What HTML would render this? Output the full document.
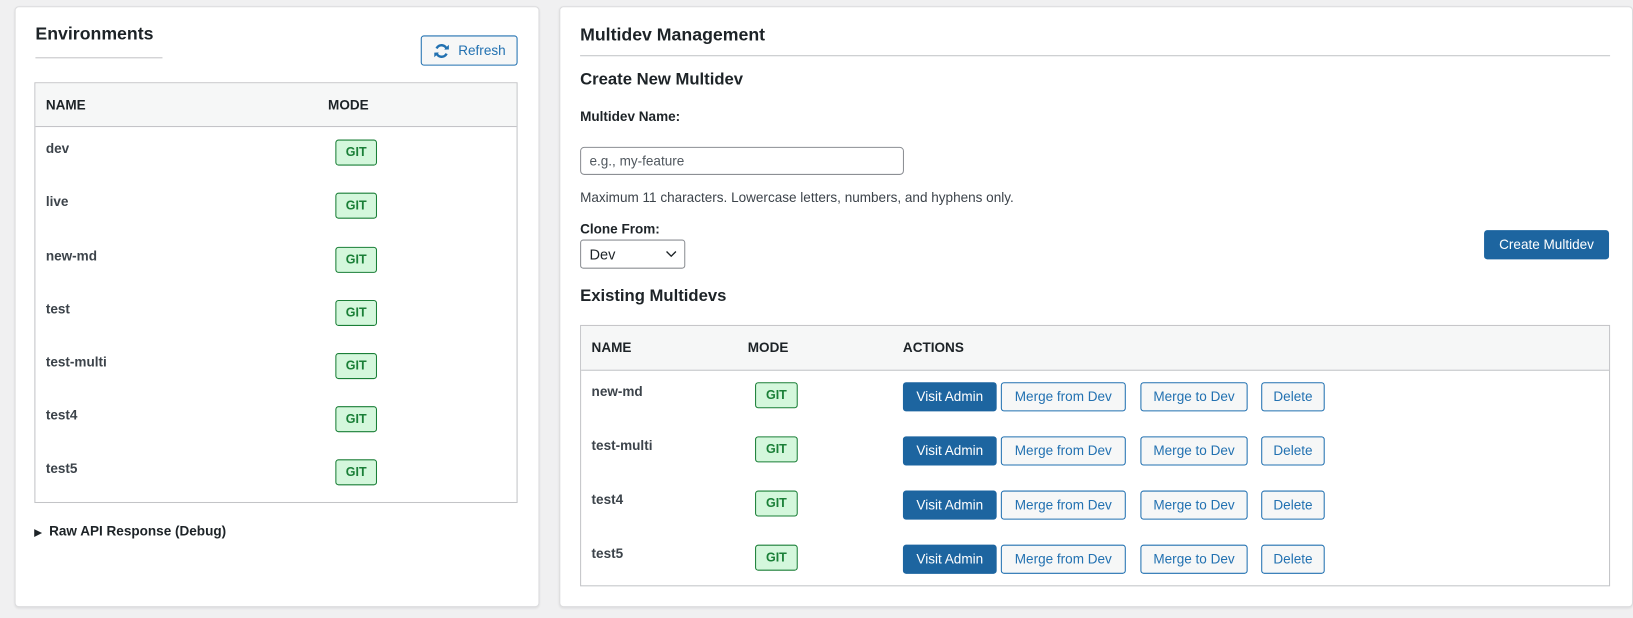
<!DOCTYPE html>
<html><head><style>
html,body{margin:0;width:1633px;height:617px;background:#f0f0f1;overflow:hidden}
#w{position:absolute;left:0;top:0;width:1568px;height:593px;transform:scale(1.04145);transform-origin:0 0;font-family:"Liberation Sans",sans-serif;color:#1d2327}
.a{position:absolute}
.panel{position:absolute;background:#fff;border:1px solid #dcdcde;border-radius:4px;box-shadow:0 1px 2px rgba(0,0,0,.08)}
.t{position:absolute;white-space:nowrap}
.b{font-weight:bold}
.git{position:absolute;width:40px;height:25px;border:1px solid #1a7f37;background:#d4f7dc;color:#1a7f37;border-radius:3px;font-size:12px;font-weight:bold;text-align:center;line-height:23px;box-sizing:border-box}
.btn{position:absolute;height:28px;box-sizing:border-box;border:1px solid #2271b1;border-radius:3px;background:#f6f7f7;color:#2271b1;font-size:13px;text-align:center;line-height:26px}
.pri{color:#fff;border-color:#1d65a0;background:#1d65a0}
.tbl{position:absolute;border:1px solid #c3c4c7;box-sizing:border-box}
.th{position:absolute;left:0;right:0;top:0;background:#f6f7f7;border-bottom:1px solid #c3c4c7}
</style></head><body><div id="w">
<div class="panel" style="left:14px;top:6px;width:502px;height:575px"></div>
<div class="panel" style="left:537px;top:6px;width:1029px;height:575px"></div>

<div class="t b" style="left:34px;top:23px;font-size:17px">Environments</div>
<div class="a" style="left:34px;top:55px;width:122px;height:1px;background:#c3c4c7"></div>
<div class="btn" style="left:404px;top:34px;width:93px;height:29px;line-height:27px;text-align:left;padding-left:35px;font-size:13px">Refresh
<svg class="a" style="left:11px;top:6px" width="16" height="16" viewBox="0 0 16 16"><path d="M13 6.5A5.2 5.2 0 0 0 3.2 5.5" stroke="#2271b1" stroke-width="2.4" fill="none"/><path d="M3 9.5A5.2 5.2 0 0 0 12.8 10.5" stroke="#2271b1" stroke-width="2.4" fill="none"/><path d="M10.5 6.5h4.5v-4.5z" fill="#2271b1"/><path d="M5.5 9.5H1v4.5z" fill="#2271b1"/></svg></div>

<div class="tbl" style="left:33px;top:79px;width:464px;height:404px"><div class="th" style="height:41px"></div></div>
<div class="t b" style="left:44px;top:93px;font-size:13px">NAME</div>
<div class="t b" style="left:315px;top:93px;font-size:13px">MODE</div>

<div class="t b" style="left:44px;top:135px;font-size:13px;color:#3c434a">dev</div><div class="git" style="left:322px;top:134px">GIT</div>
<div class="t b" style="left:44px;top:186px;font-size:13px;color:#3c434a">live</div><div class="git" style="left:322px;top:185px">GIT</div>
<div class="t b" style="left:44px;top:238px;font-size:13px;color:#3c434a">new-md</div><div class="git" style="left:322px;top:237px">GIT</div>
<div class="t b" style="left:44px;top:289px;font-size:13px;color:#3c434a">test</div><div class="git" style="left:322px;top:288px">GIT</div>
<div class="t b" style="left:44px;top:340px;font-size:13px;color:#3c434a">test-multi</div><div class="git" style="left:322px;top:339px">GIT</div>
<div class="t b" style="left:44px;top:391px;font-size:13px;color:#3c434a">test4</div><div class="git" style="left:322px;top:390px">GIT</div>
<div class="t b" style="left:44px;top:442px;font-size:13px;color:#3c434a">test5</div><div class="git" style="left:322px;top:441px">GIT</div>

<div class="t b" style="left:33px;top:502px;font-size:13px"><span style="font-size:9px">&#9654;</span>&nbsp; Raw API Response (Debug)</div>

<div class="t b" style="left:557px;top:24px;font-size:17px">Multidev Management</div>
<div class="a" style="left:557px;top:53px;width:989px;height:1px;background:#c3c4c7"></div>
<div class="t b" style="left:557px;top:68px;font-size:16px">Create New Multidev</div>
<div class="t b" style="left:557px;top:104px;font-size:13px">Multidev Name:</div>
<div class="a" style="left:557px;top:141px;width:311px;height:27px;border:1px solid #8c8f94;border-radius:4px;box-sizing:border-box"></div>
<div class="t" style="left:566px;top:147px;font-size:13px;color:#50575e">e.g., my-feature</div>
<div class="t" style="left:557px;top:182px;font-size:13px;color:#3c434a">Maximum 11 characters. Lowercase letters, numbers, and hyphens only.</div>
<div class="t b" style="left:557px;top:212px;font-size:13px">Clone From:</div>
<div class="a" style="left:557px;top:230px;width:101px;height:28px;border:1px solid #8c8f94;border-radius:3px;box-sizing:border-box"></div>
<div class="t" style="left:566px;top:236px;font-size:14px">Dev</div>
<svg class="a" style="left:639px;top:240px" width="11" height="8"><path d="M1 1.5l4.5 4.5 4.5-4.5" stroke="#1d2327" stroke-width="1.3" fill="none"/></svg>
<div class="btn pri" style="left:1425px;top:221px;width:120px">Create Multidev</div>

<div class="t b" style="left:557px;top:276px;font-size:16px">Existing Multidevs</div>
<div class="tbl" style="left:557px;top:312px;width:989px;height:251px"><div class="th" style="height:42px"></div></div>
<div class="t b" style="left:568px;top:326px;font-size:13px">NAME</div>
<div class="t b" style="left:718px;top:326px;font-size:13px">MODE</div>
<div class="t b" style="left:867px;top:326px;font-size:13px">ACTIONS</div>

<div class="t b" style="left:568px;top:368px;font-size:13px;color:#3c434a">new-md</div><div class="git" style="left:725px;top:367px;width:41px">GIT</div>
<div class="btn pri" style="left:867px;top:367px;width:90px">Visit Admin</div><div class="btn" style="left:961px;top:367px;width:120px">Merge from Dev</div><div class="btn" style="left:1095px;top:367px;width:103px">Merge to Dev</div><div class="btn" style="left:1211px;top:367px;width:61px">Delete</div>

<div class="t b" style="left:568px;top:420px;font-size:13px;color:#3c434a">test-multi</div><div class="git" style="left:725px;top:419px;width:41px">GIT</div>
<div class="btn pri" style="left:867px;top:419px;width:90px">Visit Admin</div><div class="btn" style="left:961px;top:419px;width:120px">Merge from Dev</div><div class="btn" style="left:1095px;top:419px;width:103px">Merge to Dev</div><div class="btn" style="left:1211px;top:419px;width:61px">Delete</div>

<div class="t b" style="left:568px;top:472px;font-size:13px;color:#3c434a">test4</div><div class="git" style="left:725px;top:471px;width:41px">GIT</div>
<div class="btn pri" style="left:867px;top:471px;width:90px">Visit Admin</div><div class="btn" style="left:961px;top:471px;width:120px">Merge from Dev</div><div class="btn" style="left:1095px;top:471px;width:103px">Merge to Dev</div><div class="btn" style="left:1211px;top:471px;width:61px">Delete</div>

<div class="t b" style="left:568px;top:524px;font-size:13px;color:#3c434a">test5</div><div class="git" style="left:725px;top:523px;width:41px">GIT</div>
<div class="btn pri" style="left:867px;top:523px;width:90px">Visit Admin</div><div class="btn" style="left:961px;top:523px;width:120px">Merge from Dev</div><div class="btn" style="left:1095px;top:523px;width:103px">Merge to Dev</div><div class="btn" style="left:1211px;top:523px;width:61px">Delete</div>
</div></body></html>
